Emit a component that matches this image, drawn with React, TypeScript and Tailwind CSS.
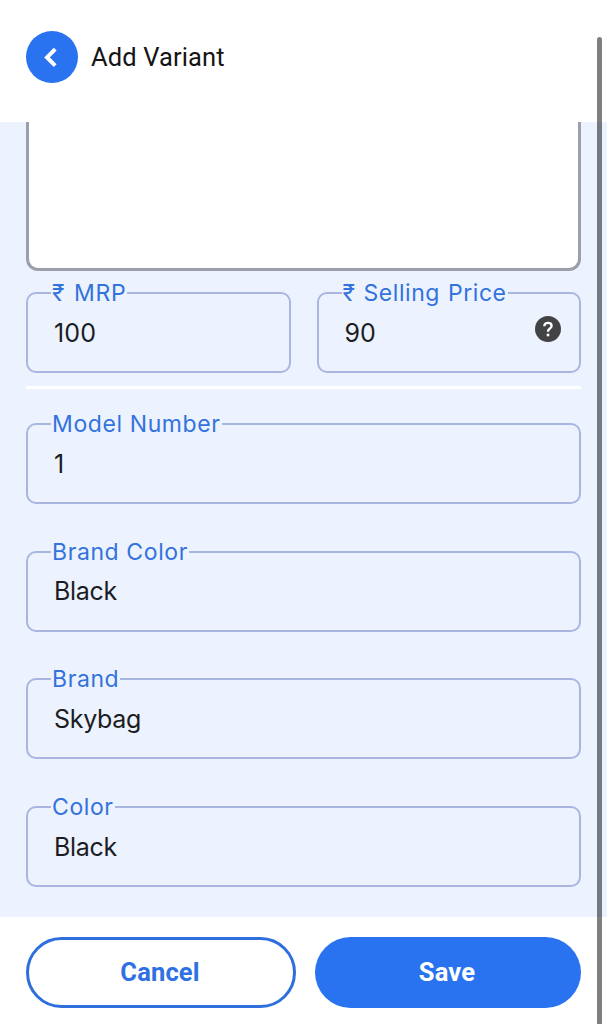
import { useState } from "react";
import type { ReactNode } from "react";

interface FieldProps {
  label: string;
  value: string;
  onChange: (value: string) => void;
  labelClass?: string;
  valueClass?: string;
  children?: ReactNode;
}

function Field({
  label,
  value,
  onChange,
  labelClass = "tracking-[0.6px]",
  valueClass = "tracking-[-0.3px]",
  children,
}: FieldProps) {
  return (
    <label className="relative flex h-[81px] w-full items-center rounded-[10px] border-2 border-[#a9b6df] pr-[18px] pl-[26px]">
      <span
        className={`absolute -top-[16px] left-[23px] h-[30px] bg-[#edf2ff] px-px text-[23px] leading-[30px] whitespace-nowrap text-[#3373dc] ${labelClass}`}
      >
        {label}
      </span>
      <input
        value={value}
        onChange={(e) => onChange(e.target.value)}
        className={`mt-[2px] h-[36px] w-full min-w-0 bg-transparent text-[25px] text-[#1b1d22] outline-none ${valueClass}`}
      />
      {children}
    </label>
  );
}

export default function App() {
  const [description, setDescription] = useState("");
  const [form, setForm] = useState({
    mrp: "100",
    sellingPrice: "90",
    modelNumber: "1",
    brandColor: "Black",
    brand: "Skybag",
    color: "Black",
  });

  const update = (key: keyof typeof form) => (value: string) =>
    setForm((prev) => ({ ...prev, [key]: value }));

  return (
    <div className="relative flex h-[1024px] w-[607px] flex-col overflow-hidden bg-white font-['Inter','Noto_Sans',sans-serif]">
      <header className="flex h-[122px] shrink-0 items-start gap-[13px] pt-[31px] pl-[26px]">
        <button className="flex h-[52px] w-[52px] items-center justify-center rounded-full bg-[#2973f0]">
          <svg width="52" height="52" viewBox="0 0 52 52" fill="none">
            <path d="M29.2 18.2 L21 26.4 L29.2 34.6" stroke="white" strokeWidth="4" />
          </svg>
        </button>
        <h1 className="font-['Roboto',sans-serif] text-[25.5px] leading-[53px] tracking-[0.12px] text-[#151515]">
          Add Variant
        </h1>
      </header>

      <main className="flex h-[795px] shrink-0 flex-col bg-[#edf2ff] pr-[26px] pl-[26px]">
        <textarea
          value={description}
          onChange={(e) => setDescription(e.target.value)}
          className="h-[149px] w-full shrink-0 resize-none rounded-b-[12px] border-[3px] border-t-0 border-[#9a9fab] bg-white p-4 outline-none"
        />

        <div className="mt-[21px] grid grid-cols-2 gap-[26px]">
          <Field
            label="₹ MRP"
            value={form.mrp}
            onChange={update("mrp")}
            labelClass="tracking-[0.6px] [word-spacing:2px]"
            valueClass="tracking-[0.1px]"
          />
          <Field
            label="₹ Selling Price"
            value={form.sellingPrice}
            onChange={update("sellingPrice")}
            labelClass="tracking-[0.55px] [word-spacing:1px]"
            valueClass="tracking-[0px]"
          >
            <svg width="26" height="26" viewBox="0 0 26 26" className="mb-[7px] shrink-0">
              <circle cx="13" cy="13" r="13" fill="#434346" />
              <path
                d="M9.3 10.2 C9.3 7.9 10.8 6.9 13 6.9 C15.2 6.9 16.6 8.1 16.6 9.9 C16.6 12.4 13 12.6 13 15.7"
                fill="none"
                stroke="white"
                strokeWidth="2.3"
              />
              <rect x="11.7" y="17.7" width="2.6" height="2.6" fill="white" />
            </svg>
          </Field>
        </div>

        <div className="mt-[13px] h-[3px] shrink-0 bg-white" />

        <div className="mt-[34px] flex flex-col gap-[46.6px]">
          <Field label="Model Number" value={form.modelNumber} onChange={update("modelNumber")} />
          <Field label="Brand Color" value={form.brandColor} onChange={update("brandColor")} />
          <Field label="Brand" value={form.brand} onChange={update("brand")} />
          <Field label="Color" value={form.color} onChange={update("color")} />
        </div>
      </main>

      <footer className="flex gap-[19px] px-[26px] pt-5 font-['Roboto',sans-serif] text-[25.5px] font-bold tracking-[0.15px]">
        <button className="h-[71px] w-[270px] rounded-full border-[3px] border-[#2f6fdd] pr-[2px] text-[#2f70e2]">
          Cancel
        </button>
        <button className="h-[71px] w-[266px] rounded-full bg-[#2973f0] pr-[2px] text-white">Save</button>
      </footer>

      {/* scroll indicator */}
      <div className="absolute top-[37px] right-[5px] bottom-0 w-[5px] rounded-t-full bg-black/50" />
    </div>
  );
}
